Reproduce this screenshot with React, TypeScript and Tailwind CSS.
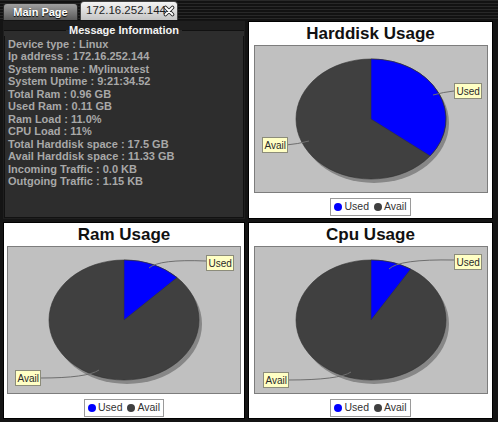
import React from 'react';

// One pie panel: title, gray plot with a shadowed ellipse pie, callout labels and a legend
type PieProps = {
  title: string;
  usedAngle: number; // degrees, clockwise from 12 o'clock
  usedLabel: { x: number; y: number };
  availLabel: { x: number; y: number };
  usedLine: string;
  availLine: string;
};

const CX = 117;
const CY = 74;
const RX = 75;
const RY = 60;

const slicePath = (deg: number) => {
  const t = (deg * Math.PI) / 180;
  const ex = CX + RX * Math.sin(t);
  const ey = CY - RY * Math.cos(t);
  const large = deg > 180 ? 1 : 0;
  return `M ${CX} ${CY} L ${CX} ${CY - RY} A ${RX} ${RY} 0 ${large} 1 ${ex.toFixed(1)} ${ey.toFixed(1)} Z`;
};

const Callout: React.FC<{ x: number; y: number; text: string; w: number }> = ({ x, y, text, w }) => (
  <g>
    <rect x={x + 0.5} y={y + 0.5} width={w} height={15} fill="#ffffc4" stroke="#8c8c7a" />
    <text x={x + 2.5} y={y + 12} fontSize="10" fill="#2a2a2a" fontFamily="'Liberation Sans', Arial, sans-serif">
      {text}
    </text>
  </g>
);

const PiePanel: React.FC<PieProps> = ({ title, usedAngle, usedLabel, availLabel, usedLine, availLine }) => (
  <div className="flex flex-col items-center bg-white border border-black pt-[2px]">
    <div className="text-[17px] font-bold leading-[20px] text-[#111]">{title}</div>
    <svg width="234" height="148" className="mt-[1px] block">
      <rect x="0.5" y="0.5" width="233" height="147" fill="#c0c0c0" stroke="#7d7d7d" />
      <ellipse cx={CX + 3} cy={CY + 4} rx={RX} ry={RY} fill="#878787" />
      <ellipse cx={CX} cy={CY} rx={RX} ry={RY} fill="#404040" stroke="#333" strokeWidth="0.6" />
      <path d={slicePath(usedAngle)} fill="#0000ff" stroke="#333" strokeWidth="0.6" />
      <path d={usedLine} fill="none" stroke="#6e6e6e" strokeWidth="1" />
      <path d={availLine} fill="none" stroke="#6e6e6e" strokeWidth="1" />
      <Callout x={usedLabel.x} y={usedLabel.y} text="Used" w={27} />
      <Callout x={availLabel.x} y={availLabel.y} text="Avail" w={25} />
    </svg>
    <div className="mt-[5px] flex h-[18px] items-center gap-[2px] border border-[#9a9a9a] px-[3px] text-[10.5px] text-[#333]">
      <span className="h-[8px] w-[8px] rounded-full bg-[#0000ff]" />
      <span className="mr-[3px]">Used</span>
      <span className="h-[8px] w-[8px] rounded-full bg-[#404040]" />
      <span>Avail</span>
    </div>
  </div>
);

const INFO_LINES = [
  'Device type : Linux',
  'Ip address : 172.16.252.144',
  'System name : Mylinuxtest',
  'System Uptime : 9:21:34.52',
  'Total Ram : 0.96 GB',
  'Used Ram : 0.11 GB',
  'Ram Load : 11.0%',
  'CPU Load : 11%',
  'Total Harddisk space : 17.5 GB',
  'Avail Harddisk space : 11.33 GB',
  'Incoming Traffic : 0.0 KB',
  'Outgoing Traffic : 1.15 KB',
];

const InfoPanel: React.FC = () => (
  <div className="flex flex-col bg-[#1e1e1e] px-[1px] pt-[3px] pb-[1px]">
    {/* titled border: line runs through the middle of the caption */}
    <div className="flex h-[12px] items-center bg-[linear-gradient(to_bottom,#1e1e1e_50%,#2d2d2d_50%)]">
      <div className="h-[1px] flex-1 bg-[#111]" />
      <div className="px-[3px] text-[11px] font-bold leading-[12px] text-[#f4f4f4]">Message Information</div>
      <div className="h-[1px] flex-1 bg-[#111]" />
    </div>
    <div className="flex-1 border border-t-0 border-[#111] bg-[#2d2d2d] px-[3px] pt-[2px] text-[11px] font-bold leading-[12.45px] text-[#a8a8a8]">
      {INFO_LINES.map((line) => (
        <div key={line}>{line}</div>
      ))}
    </div>
  </div>
);

const CloseIcon: React.FC = () => (
  <svg width="12" height="12" viewBox="0 0 12 12" className="block">
    <path d="M2.5 2.5 L9.5 9.5 M9.5 2.5 L2.5 9.5" stroke="#222" strokeWidth="3.6" strokeLinecap="round" />
    <path d="M2.5 2.5 L9.5 9.5 M9.5 2.5 L2.5 9.5" stroke="#fff" strokeWidth="1.8" strokeLinecap="round" />
  </svg>
);

const App: React.FC = () => {
  return (
    <div className="w-[498px] h-[422px] overflow-hidden bg-[#141414] font-['Liberation_Sans',Arial,sans-serif]">
      {/* Tab strip */}
      <div className="flex h-[20px] items-end gap-[2px] pl-[3px] bg-[repeating-linear-gradient(to_bottom,#282828_0px,#282828_1px,#121212_1px,#121212_3px)]">
        <div className="flex h-[17px] w-[75px] items-center justify-center rounded-t-[4px] border border-b-0 border-[#2a2a2a] bg-gradient-to-b from-[#a0a0a0] to-[#5a5a5a] text-[11px] font-bold text-white [text-shadow:0_1px_1px_#000]">
          Main Page
        </div>
        <div className="flex h-[19px] w-[98px] items-center rounded-t-[4px] border border-b-0 border-[#444] bg-gradient-to-b from-[#f4f4f4] to-[#c4c4c4] pl-[5px] text-[11.5px] text-[#1e1e1e]">
          <span>172.16.252.144</span>
          <span className="-ml-[3px]">
            <CloseIcon />
          </span>
        </div>
      </div>

      {/* Panels */}
      <div className="grid grid-cols-[242px_245px] grid-rows-[198px_197px] gap-[3px] px-[3px] pt-[1px]">
        <InfoPanel />
        <PiePanel
          title="Harddisk Usage"
          usedAngle={128}
          usedLabel={{ x: 200, y: 38 }}
          availLabel={{ x: 8, y: 92 }}
          usedLine="M 179 50 Q 190 47 200 46"
          availLine="M 55 96 Q 44 99 32 100"
        />
        <PiePanel
          title="Ram Usage"
          usedAngle={45}
          usedLabel={{ x: 199, y: 9 }}
          availLabel={{ x: 8, y: 124 }}
          usedLine="M 142 22 Q 152 13 199 15"
          availLine="M 92 124 Q 80 132 34 132"
        />
        <PiePanel
          title="Cpu Usage"
          usedAngle={32}
          usedLabel={{ x: 200, y: 8 }}
          availLabel={{ x: 9, y: 126 }}
          usedLine="M 135 23 Q 145 13 200 14"
          availLine="M 97 126 Q 85 134 34 134"
        />
      </div>
    </div>
  );
};

export default App;
